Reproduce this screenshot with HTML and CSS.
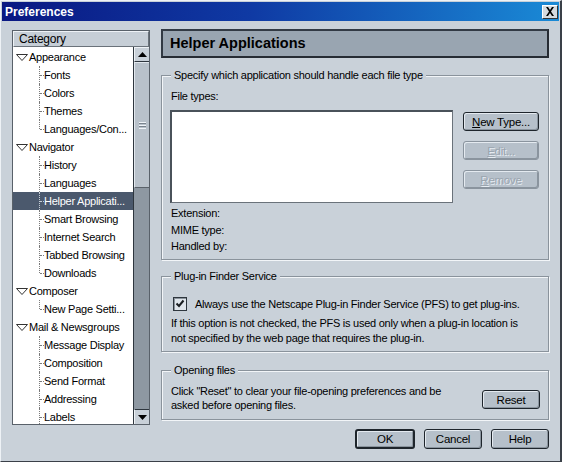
FILE: index.html
```html
<!DOCTYPE html>
<html>
<head>
<meta charset="utf-8">
<link rel="stylesheet" href="styles.css">
</head>
<body>
<div class="window">
  <div class="titlebar">
    <span class="title">Preferences</span>
    <span class="close"><svg width="10" height="9" viewBox="0 0 10 9"><path d="M1 0h2l2 3 2-3h2L6 4.5 9 9H7L5 6 3 9H1l3-4.5z" fill="#000"/></svg></span>
  </div>
  <div class="body">
    <div class="main">
      <div class="tree">
        <div class="tree-head">Category</div>
        <div class="tree-body">
          <ul class="tree-list">
            <li class="row parent"><svg class="tri" width="12" height="7" viewBox="0 0 12 7"><polygon points="0.5,0.5 11.5,0.5 6,6.5" fill="#fff" stroke="#333"/></svg><span>Appearance</span></li>
            <li class="row child">Fonts</li>
            <li class="row child">Colors</li>
            <li class="row child">Themes</li>
            <li class="row child last">Languages/Con...</li>
            <li class="row parent"><svg class="tri" width="12" height="7" viewBox="0 0 12 7"><polygon points="0.5,0.5 11.5,0.5 6,6.5" fill="#fff" stroke="#333"/></svg><span>Navigator</span></li>
            <li class="row child">History</li>
            <li class="row child">Languages</li>
            <li class="row child selected">Helper Applicati...</li>
            <li class="row child">Smart Browsing</li>
            <li class="row child">Internet Search</li>
            <li class="row child">Tabbed Browsing</li>
            <li class="row child last">Downloads</li>
            <li class="row parent"><svg class="tri" width="12" height="7" viewBox="0 0 12 7"><polygon points="0.5,0.5 11.5,0.5 6,6.5" fill="#fff" stroke="#333"/></svg><span>Composer</span></li>
            <li class="row child last">New Page Setti...</li>
            <li class="row parent"><svg class="tri" width="12" height="7" viewBox="0 0 12 7"><polygon points="0.5,0.5 11.5,0.5 6,6.5" fill="#fff" stroke="#333"/></svg><span>Mail &amp; Newsgroups</span></li>
            <li class="row child">Message Display</li>
            <li class="row child">Composition</li>
            <li class="row child">Send Format</li>
            <li class="row child">Addressing</li>
            <li class="row child">Labels</li>
          </ul>
          <div class="scrollbar">
            <div class="sb-btn"><svg width="9" height="5" viewBox="0 0 9 5"><polygon points="4.5,0 9,5 0,5" fill="#000"/></svg></div>
            <div class="sb-thumb"><span class="grip"></span></div>
            <div class="sb-track"></div>
            <div class="sb-btn"><svg width="9" height="5" viewBox="0 0 9 5"><polygon points="0,0 9,0 4.5,5" fill="#000"/></svg></div>
          </div>
        </div>
      </div>
      <div class="panel">
        <div class="panel-head">Helper Applications</div>
        <fieldset class="group g1">
          <legend>Specify which application should handle each file type</legend>
          <div class="label">File types:</div>
          <div class="g1-row">
            <div class="listbox"></div>
            <div class="btn-col">
              <div class="btn wide"><u>N</u>ew Type...</div>
              <div class="btn wide disabled"><u>E</u>dit...</div>
              <div class="btn wide disabled"><u>R</u>emove</div>
            </div>
          </div>
          <div class="info">
            <div>Extension:</div>
            <div>MIME type:</div>
            <div>Handled by:</div>
          </div>
        </fieldset>
        <fieldset class="group g2">
          <legend>Plug-in Finder Service</legend>
          <div class="check-row">
            <span class="checkbox"><svg width="12" height="12" viewBox="0 0 12 12"><path d="M2.5 5.5l2.5 2.5 4.5-5.5" fill="none" stroke="#1a1e22" stroke-width="2"/></svg></span>
            <span>Always use the Netscape Plug-in Finder Service (PFS) to get plug-ins.</span>
          </div>
          <p class="para">If this option is not checked, the PFS is used only when a plug-in location is<br>not specified by the web page that requires the plug-in.</p>
        </fieldset>
        <fieldset class="group g3">
          <legend>Opening files</legend>
          <div class="g3-row">
            <p class="para">Click "Reset" to clear your file-opening preferences and be<br>asked before opening files.</p>
            <div class="btn reset">Reset</div>
          </div>
        </fieldset>
      </div>
    </div>
    <div class="actions">
      <div class="btn default">OK</div>
      <div class="btn act">Cancel</div>
      <div class="btn act">Help</div>
    </div>
  </div>
</div>
</body>
</html>
```

FILE: styles.css
```css
* { box-sizing: border-box; }
html, body { margin: 0; padding: 0; }
body {
  font-family: "Liberation Sans", Arial, sans-serif;
  font-size: 11px;
  letter-spacing: -0.25px;
  color: #000;
  background: #c9d1d9;
}
.window {
  width: 562px;
  height: 462px;
  background: #c9d1d9;
  border-top: 1px solid #eef2f6;
  border-left: 1px solid #eef2f6;
  border-right: 2px solid #3a4048;
  border-bottom: 1px solid #3a4048;
  padding: 1px 1px 0 1px;
  display: flex;
  flex-direction: column;
}
.titlebar {
  height: 19px;
  background: linear-gradient(90deg, #0a1882 0%, #0f3aa4 45%, #1a8ad6 100%);
  display: flex;
  align-items: center;
  justify-content: space-between;
  padding: 0 1px 0 3px;
}
.title {
  color: #fff;
  font-weight: bold;
  font-size: 12px;
  letter-spacing: 0;
}
.close {
  width: 16px;
  height: 14px;
  background: #d4dadf;
  border: 1px solid;
  border-color: #fff #303438 #303438 #fff;
  display: flex;
  align-items: center;
  justify-content: center;
}
.body {
  flex: 1;
  padding: 8px 10px 0 10px;
  display: flex;
  flex-direction: column;
}
.main {
  display: flex;
  gap: 11px;
}
/* tree */
.tree {
  width: 138px;
  height: 395px;
  margin-top: 1px;
  border: 1px solid #59616a;
  display: flex;
  flex-direction: column;
  background: #fff;
}
.tree-head {
  height: 16px;
  background: #c6ced6;
  border-top: 1px solid #eef2f6;
  border-left: 1px solid #eef2f6;
  border-bottom: 1px solid #6a727a;
  border-right: 1px solid #6a727a;
  padding-left: 5px;
  line-height: 14px;
  font-size: 12px;
}
.tree-body {
  flex: 1;
  display: flex;
  min-height: 0;
  overflow: hidden;
}
.tree-list {
  list-style: none;
  margin: 0;
  padding: 1px 0 0 0;
  flex: 1;
  overflow: hidden;
}
.row {
  height: 18px;
  display: flex;
  align-items: center;
  white-space: nowrap;
  position: relative;
}
.row.parent .tri { margin-left: 3px; margin-right: 1px; }
.row.child { padding-left: 31px; }
.row.child::before {
  content: "";
  position: absolute;
  left: 26px;
  top: 0;
  height: 18px;
  border-left: 1px dotted #7a7a7a;
}
.row.child.last::before { height: 9px; }
.row.child::after {
  content: "";
  position: absolute;
  left: 27px;
  top: 9px;
  width: 4px;
  border-top: 1px dotted #7a7a7a;
}
.row.selected {
  background: #4b596d;
  color: #fff;
}
.row.selected::before, .row.selected::after { border-color: #c8d0d8; }
.scrollbar {
  width: 16px;
  border-left: 1px solid #2e363e;
  display: flex;
  flex-direction: column;
  background: #8e98a2;
}
.sb-btn {
  height: 15px;
  background: #c8d0d8;
  border-top: 1px solid #eef2f6;
  border-left: 1px solid #eef2f6;
  border-bottom: 1px solid #2e363e;
  display: flex;
  align-items: center;
  justify-content: center;
}
.sb-btn:last-child { border-top: 1px solid #2e363e; border-bottom: none; }
.sb-thumb {
  height: 126px;
  background: #b8c1ca;
  border-top: 1px solid #e2e8ee;
  border-left: 1px solid #e2e8ee;
  border-bottom: 1px solid #5a626a;
  display: flex;
  align-items: center;
  justify-content: center;
}
.grip {
  width: 7px;
  height: 7px;
  background: repeating-linear-gradient(180deg, #f0f4f8 0 1px, #7a848e 1px 2px, transparent 2px 3px);
}
.sb-track { flex: 1; }
/* panel */
.panel {
  width: 388px;
  display: flex;
  flex-direction: column;
}
.panel-head {
  height: 29px;
  background: #99a5b1;
  border: 2px solid #323a44;
  border-right-color: #262c34;
  border-bottom-color: #262c34;
  font-weight: bold;
  font-size: 14.5px;
  letter-spacing: 0;
  line-height: 25px;
  padding-left: 7px;
}
.group {
  margin: 0;
  border: 1px solid #8a939c;
  box-shadow: inset 1px 1px 0 #f2f5f8, 1px 1px 0 #f2f5f8;
  padding: 0 8px 0 9px;
  min-width: 0;
}
.group legend {
  padding: 0 3px;
  line-height: 13px;
  background: #c9d1d9;
  white-space: nowrap;
}
.g1 { margin-top: 11px; height: 191px; padding-top: 8px; }
.g2 { margin-top: 10px; height: 82px; padding-top: 14px; }
.g3 { margin-top: 12px; height: 56px; padding-top: 7px; }
.label { line-height: 13px; }
.g1-row { display: flex; margin-top: 7px; }
.listbox {
  width: 283px;
  height: 93px;
  margin-left: -1px;
  background: #fff;
  border: 1px solid #6a727a;
  border-top: 2px solid #4a525a;
  border-left: 2px solid #4a525a;
}
.btn-col {
  margin-left: 10px;
  margin-top: 2px;
  display: flex;
  flex-direction: column;
  gap: 10px;
}
.btn {
  height: 19px;
  background: #b6c0ca;
  border: 1px solid #1e252c;
  border-radius: 3px;
  box-shadow: inset 1px 1px 0 #e4eaf0, inset -1px -1px 0 #8a949e;
  display: flex;
  align-items: center;
  justify-content: center;
  font-size: 11.5px;
  white-space: nowrap;
}
.btn.wide { width: 76px; }
.btn.disabled {
  border-color: #8a949e;
  color: #9ba5af;
  text-shadow: 1px 1px 0 #e6ecf2;
}
.info { margin-top: 2px; line-height: 16.5px; }
.check-row { display: flex; align-items: center; height: 14px; gap: 8px; margin-left: 2px; }
.checkbox {
  width: 14px;
  height: 14px;
  border: 1px solid #2e363e;
  background: #dfe5eb;
  box-shadow: inset 1px 1px 0 #8a939c;
  display: flex;
  align-items: center;
  justify-content: center;
}
.para { margin: 5px 0 0 0; line-height: 15px; white-space: nowrap; }
.g3-row { display: flex; align-items: flex-start; justify-content: space-between; }
.g3-row .para { margin-top: 0; line-height: 14px; }
.btn.reset { width: 58px; margin-top: 6px; height: 19px; }
.actions {
  display: flex;
  justify-content: flex-end;
  gap: 9px;
  margin-top: 4px;
}
.btn.default { width: 60px; height: 20px; border-width: 2px; }
.btn.act { width: 58px; height: 20px; }
```
